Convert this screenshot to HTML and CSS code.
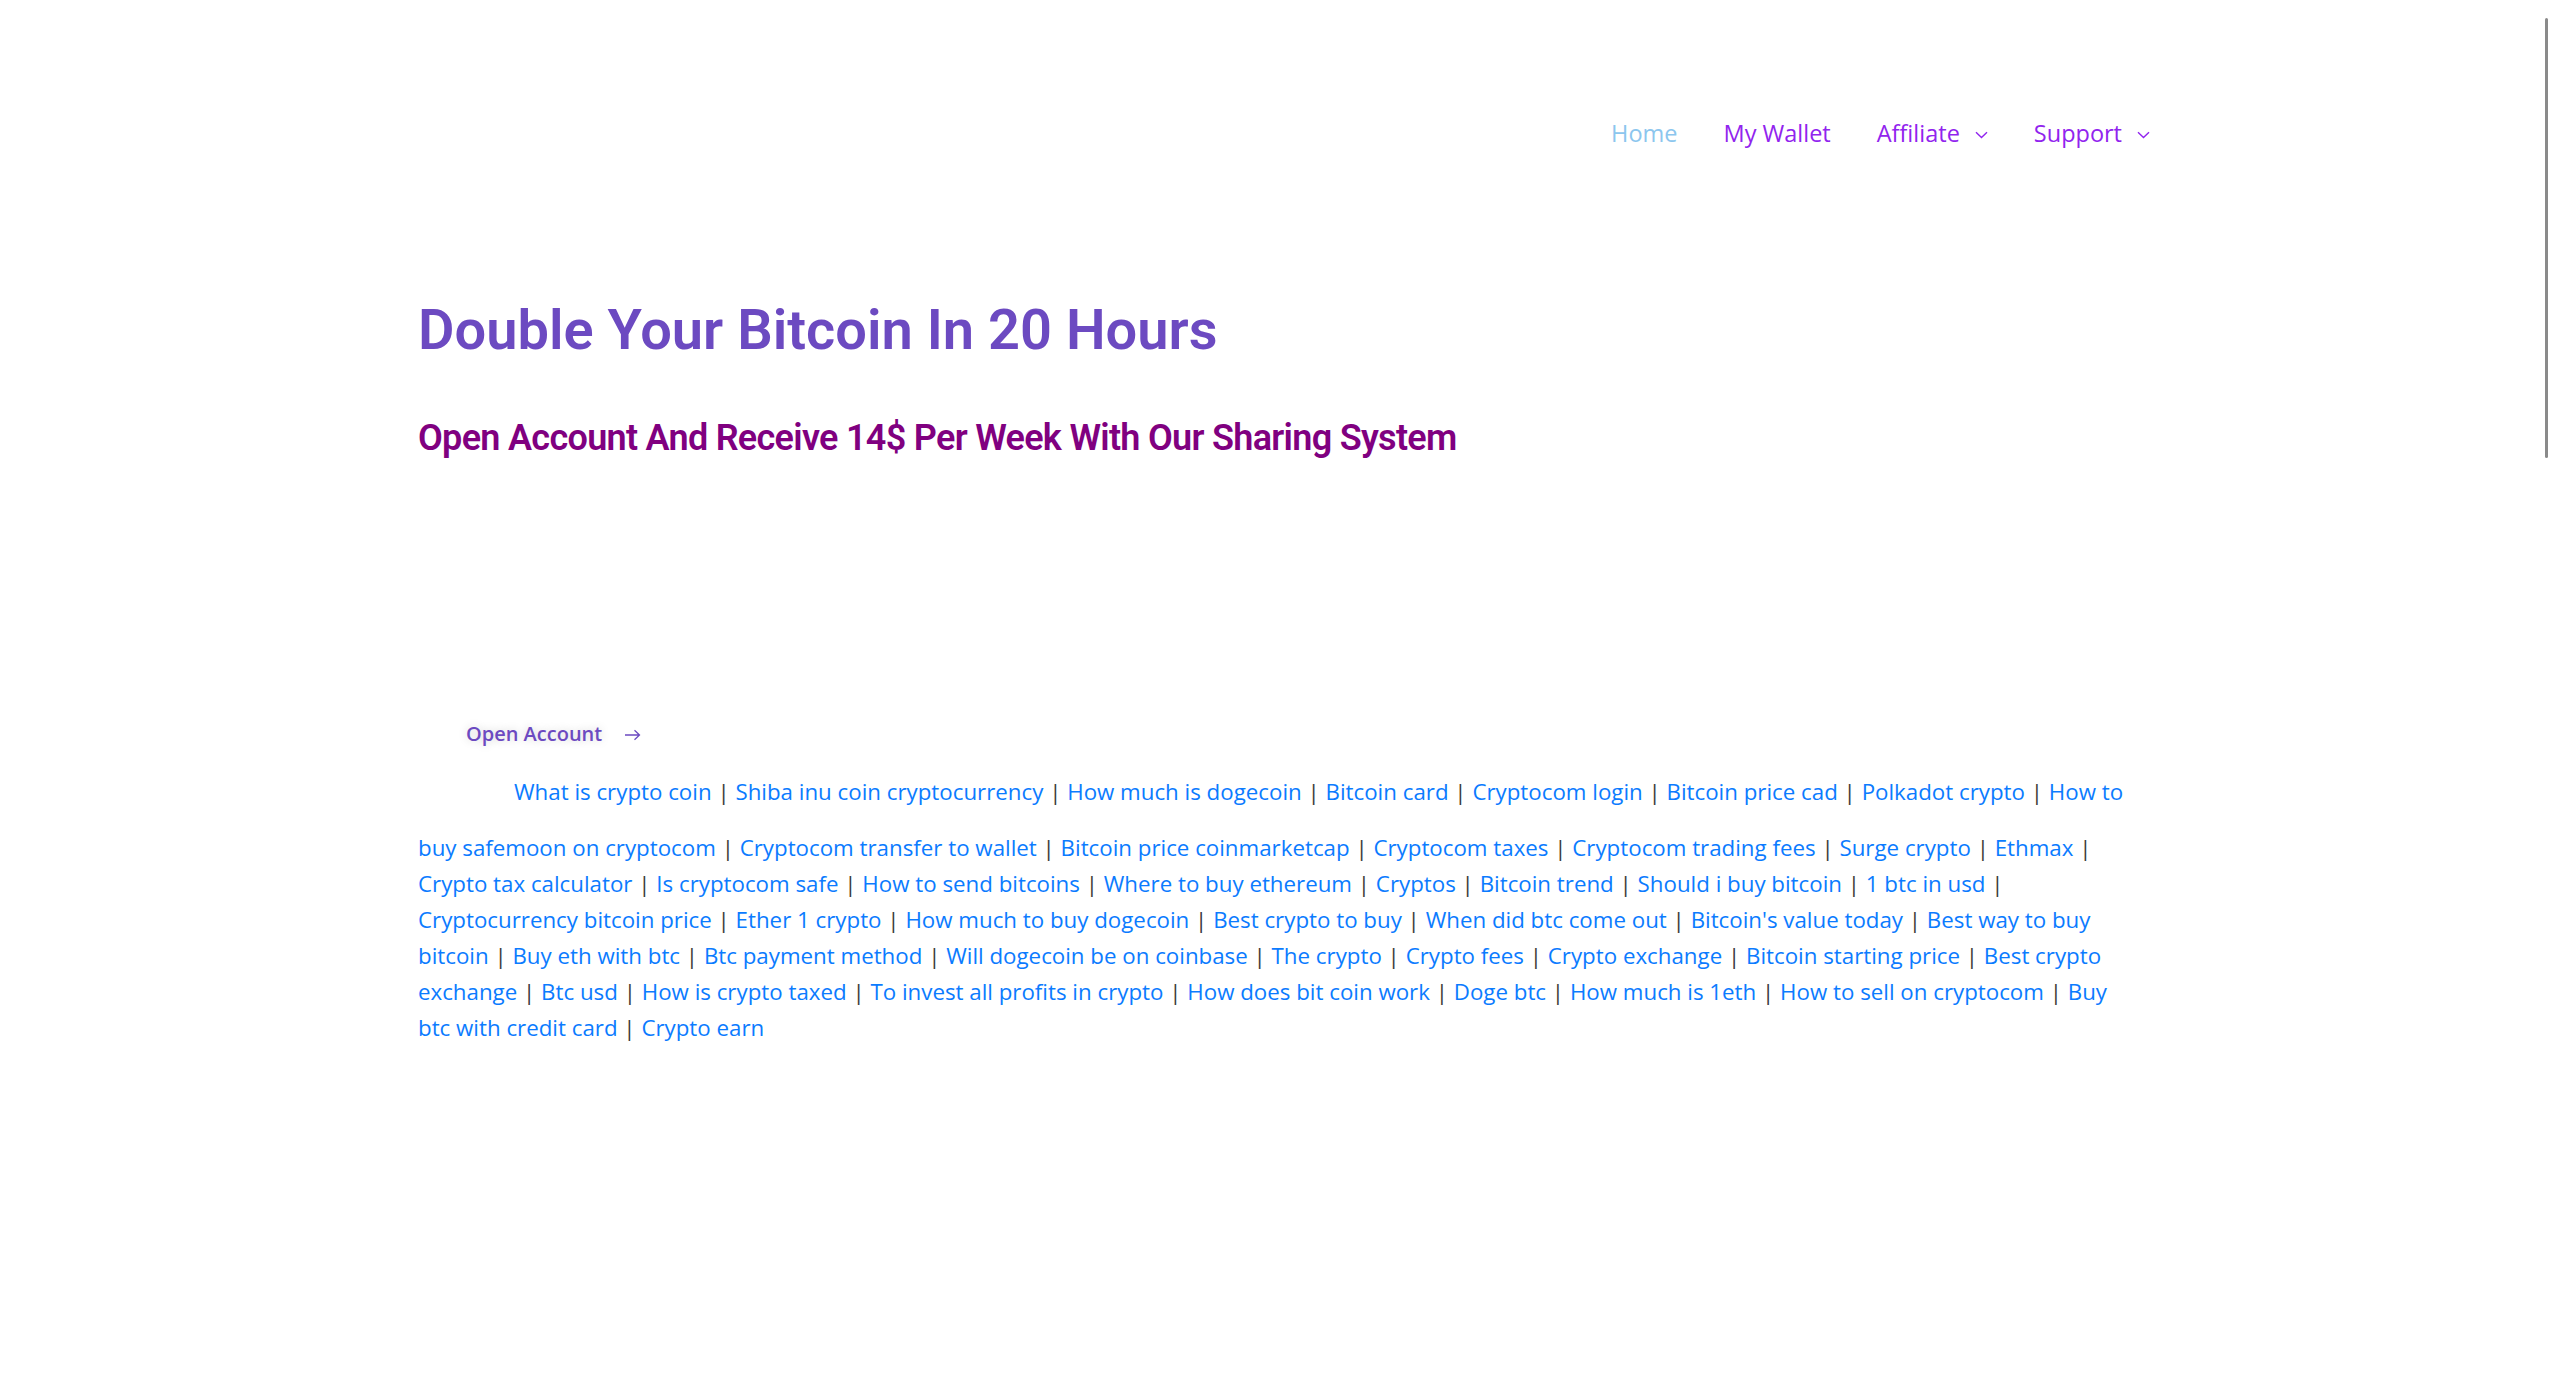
FILE: index.html
```html
<!DOCTYPE html>
<html lang="en">
<head>
<meta charset="utf-8">
<title>Double Your Bitcoin In 20 Hours</title>
<link rel="stylesheet" href="styles.css">
</head>
<body>
<header class="site-header">
  <div class="container header-inner">
    <nav class="main-nav">
      <ul class="menu">
        <li class="menu-item current"><a href="#">Home</a></li>
        <li class="menu-item"><a href="#">My Wallet</a></li>
        <li class="menu-item"><a href="#">Affiliate</a><svg class="chev" width="13" height="8" viewBox="0 0 13 8"><path d="M1 1.2 L6.5 6.5 L12 1.2" fill="none" stroke="currentColor" stroke-width="1.4"/></svg></li>
        <li class="menu-item"><a href="#">Support</a><svg class="chev" width="13" height="8" viewBox="0 0 13 8"><path d="M1 1.2 L6.5 6.5 L12 1.2" fill="none" stroke="currentColor" stroke-width="1.4"/></svg></li>
      </ul>
    </nav>
  </div>
</header>
<main class="container content">
  <h1 class="title">Double Your Bitcoin In 20 Hours</h1>
  <h2 class="subtitle">Open Account And Receive 14$ Per Week With Our Sharing System</h2>
  <div class="embed-space"></div>
  <div class="cta">
    <a class="cta-btn" href="#"><span class="cta-text">Open Account</span><svg class="arrow" width="17" height="12" viewBox="0 0 17 12"><path d="M1 6 H15.5 M10.5 1.2 L15.5 6 L10.5 10.8" fill="none" stroke="currentColor" stroke-width="1.3"/></svg></a>
  </div>
  <p class="links"><span class="lead-space"></span><a href="#">What is crypto coin</a> | <a href="#">Shiba inu coin cryptocurrency</a> | <a href="#">How much is dogecoin</a> | <a href="#">Bitcoin card</a> | <a href="#">Cryptocom login</a> | <a href="#">Bitcoin price cad</a> | <a href="#">Polkadot crypto</a> | <a href="#">How to buy safemoon on cryptocom</a> | <a href="#">Cryptocom transfer to wallet</a> | <a href="#">Bitcoin price coinmarketcap</a> | <a href="#">Cryptocom taxes</a> | <a href="#">Cryptocom trading fees</a> | <a href="#">Surge crypto</a> | <a href="#">Ethmax</a> | <a href="#">Crypto tax calculator</a> | <a href="#">Is cryptocom safe</a> | <a href="#">How to send bitcoins</a> | <a href="#">Where to buy ethereum</a> | <a href="#">Cryptos</a> | <a href="#">Bitcoin trend</a> | <a href="#">Should i buy bitcoin</a> | <a href="#">1 btc in usd</a> | <a href="#">Cryptocurrency bitcoin price</a> | <a href="#">Ether 1 crypto</a> | <a href="#">How much to buy dogecoin</a> | <a href="#">Best crypto to buy</a> | <a href="#">When did btc come out</a> | <a href="#">Bitcoin's value today</a> | <a href="#">Best way to buy bitcoin</a> | <a href="#">Buy eth with btc</a> | <a href="#">Btc payment method</a> | <a href="#">Will dogecoin be on coinbase</a> | <a href="#">The crypto</a> | <a href="#">Crypto fees</a> | <a href="#">Crypto exchange</a> | <a href="#">Bitcoin starting price</a> | <a href="#">Best crypto exchange</a> | <a href="#">Btc usd</a> | <a href="#">How is crypto taxed</a> | <a href="#">To invest all profits in crypto</a> | <a href="#">How does bit coin work</a> | <a href="#">Doge btc</a> | <a href="#">How much is 1eth</a> | <a href="#">How to sell on cryptocom</a> | <a href="#">Buy btc with credit card</a> | <a href="#">Crypto earn</a></p>
</main>
<div class="scroll-thumb"></div>
</body>
</html>
```
FILE: styles.css
```css
html, body {
  margin: 0;
  padding: 0;
  background: #ffffff;
}
body {
  font-family: "Open Sans", "Noto Sans", sans-serif;
  color: #3a3a3a;
  min-height: 1396px;
}
.container {
  width: 1715px;
  margin: 0 auto;
}
.site-header {
  padding-top: 118px;
}
.header-inner {
  display: flex;
  justify-content: flex-end;
}
.menu {
  list-style: none;
  margin: 0 -17px 0 0;
  padding: 0;
  display: flex;
  gap: 46px;
}
.menu-item {
  display: flex;
  align-items: center;
  font-size: 23.5px;
  line-height: 30px;
  color: #9124ee;
}
.menu-item a {
  color: #9124ee;
  text-decoration: none;
}
.menu-item.current a {
  color: #8cc6ee;
}
.chev {
  margin-left: 15px;
  margin-top: 4px;
  color: #9124ee;
}
.content {
  padding-top: 150px;
}
.title {
  margin: 0;
  font-family: Roboto, "Open Sans", sans-serif;
  font-weight: 600;
  font-size: 56px;
  line-height: 64.8px;
  letter-spacing: 0;
  color: #6c4ac1;
}
.subtitle {
  margin: 54px 0 0 0;
  font-family: Roboto, "Open Sans", sans-serif;
  font-weight: 600;
  font-size: 36px;
  line-height: 43.2px;
  letter-spacing: -0.7px;
  color: #800080;
}
.embed-space {
  height: 259px;
}
.cta {
  padding-left: 48px;
}
.cta-btn {
  display: inline-flex;
  align-items: center;
  gap: 22px;
  text-decoration: none;
  color: #6c4ac1;
  font-weight: 600;
  font-size: 20px;
  line-height: 30px;
}
.cta-text {
  text-shadow: 0 0 10px rgba(0, 0, 0, 0.18);
}
.arrow {
  color: #6c4ac1;
  margin-top: 2px;
}
.links {
  margin: 25px 0 0 0;
  font-size: 22.3px;
  line-height: 36px;
  color: #3a3a3a;
}
.links a {
  color: #0b7bff;
  text-decoration: none;
}
.lead-space {
  display: inline-block;
  width: 96px;
  height: 56px;
  vertical-align: top;
}
.scroll-thumb {
  position: fixed;
  top: 18px;
  right: 3px;
  width: 3px;
  height: 440px;
  background: #8a8a8a;
  border-radius: 2px;
}
```
